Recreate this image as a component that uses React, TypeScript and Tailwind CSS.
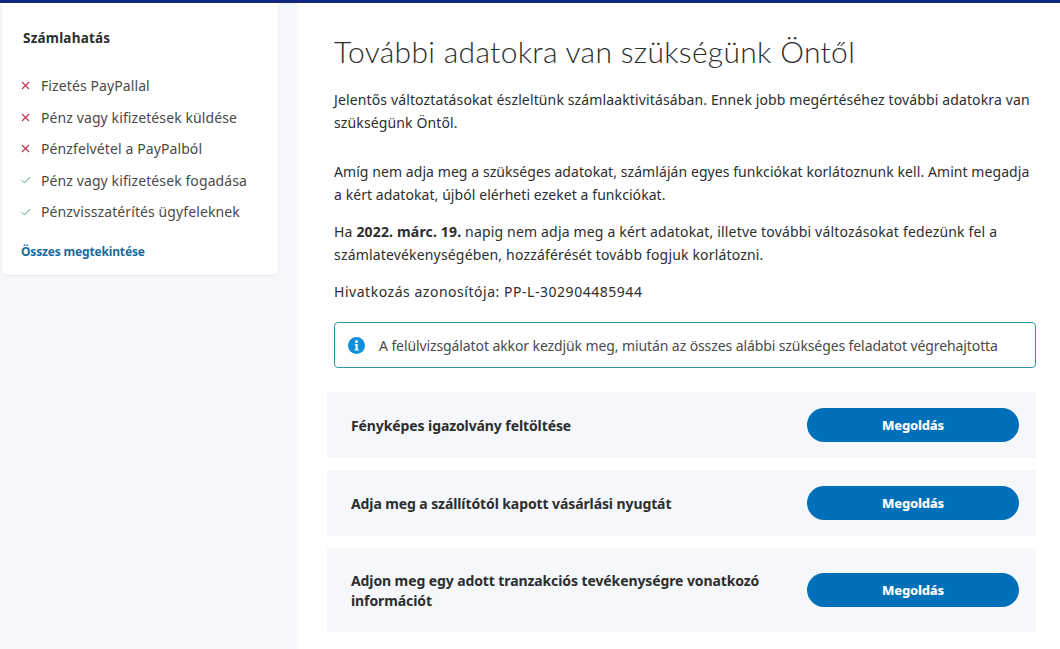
import React from "react";

function Cross() {
  return (
    <svg width="9" height="9" viewBox="0 0 9 9" className="shrink-0">
      <path d="M1 1l7 7M8 1L1 8" stroke="#c0324a" strokeWidth="1.1" fill="none" />
    </svg>
  );
}
function Check() {
  return (
    <svg width="10" height="8" viewBox="0 0 10 8" className="shrink-0">
      <path d="M.8 4.2l2.7 2.7L9.2 1" stroke="#4f9a86" strokeWidth="1" fill="none" />
    </svg>
  );
}

const items: [string, boolean, string][] = [
  ["Fizetés PayPallal", false, "h-[31px]"],
  ["Pénz vagy kifizetések küldése", false, "h-[32px]"],
  ["Pénzfelvétel a PayPalból", false, "h-[31px]"],
  ["Pénz vagy kifizetések fogadása", true, "h-[32px]"],
  ["Pénzvisszatérítés ügyfeleknek", true, "h-[31px]"],
];

function Task({ text, h }: { text: React.ReactNode; h: string }) {
  return (
    <div className={`flex items-center justify-between bg-[#f5f7fa] pl-[24px] pr-[17px] ${h}`}>
      <div className="w-[430px] pt-[2px] text-[14px] leading-[20px] font-bold tracking-[-0.1px] text-[#2c2e2f]">{text}</div>
      <button className="h-[34px] w-[212px] rounded-full bg-[#0070ba] pt-[1px] text-[13px] font-extrabold tracking-[-0.2px] text-white">Megoldás</button>
    </div>
  );
}

export default function App() {
  return (
    <div className="h-[649px] w-[1060px] overflow-hidden bg-white font-['Noto_Sans',sans-serif] text-[#2c2e2f]">
      <div className="h-[3px] bg-[#11297f]" />
      <div className="flex h-[646px]">
        <aside className="h-full w-[298px] shrink-0 bg-[#f5f7fa] pl-[2px]">
          <div className="h-[272px] w-[276px] rounded-b-[5px] bg-white pl-[19px] pt-[25px] shadow-[0_1px_2px_rgba(0,0,0,0.08)]">
            <h2 className="pl-[2px] text-[13.5px] leading-[20px] font-bold tracking-[0.2px] text-[#2c2e2f]">Számlahatás</h2>
            <ul className="mt-[22px]">
              {items.map(([label, ok, h]) => (
                <li key={label} className={`flex items-center gap-[11px] text-[14px] tracking-[0.1px] text-[#4a4a4a] ${h}`}>
                  <span className="flex w-[9px] justify-center">{ok ? <Check /> : <Cross />}</span>
                  {label}
                </li>
              ))}
            </ul>
            <a className="mt-[15px] block text-[12px] leading-[20px] font-bold tracking-[-0.17px] text-[#1a6a9f]">Összes megtekintése</a>
          </div>
        </aside>
        <main className="flex-1 pl-[29px] pr-[24px]">
          <h1 className="mt-[28px] pl-[7px] font-['Lato',sans-serif] text-[30px] leading-[40px] font-light tracking-[0.32px] text-[#2c2e2f]">
            További adatokra van szükségünk Öntől
          </h1>
          <div className="pl-[7px] text-[14px] leading-[23px] tracking-[0.17px] text-[#2c2e2f]">
            <p className="mt-[17px] tracking-[0.13px]">
              Jelentős változtatásokat észleltünk számlaaktivitásában. Ennek jobb megértéséhez további adatokra van szükségünk Öntől.
            </p>
            <p className="mt-[26px] tracking-[0.07px]">
              Amíg nem adja meg a szükséges adatokat, számláján egyes funkciókat korlátoznunk kell. Amint megadja a kért adatokat, újból elérheti ezeket a funkciókat.
            </p>
            <p className="mt-[14px]">
              Ha <b>2022. márc. 19.</b> napig nem adja meg a kért adatokat, illetve további változásokat fedezünk fel a számlatevékenységében, hozzáférését tovább fogjuk korlátozni.
            </p>
            <p className="mt-[14px] tracking-[0.53px]">Hivatkozás azonosítója: PP-L-302904485944</p>
          </div>
          <div className="mt-[19px] ml-[7px] flex h-[46px] items-center gap-[14px] rounded-[4px] border border-[#2b97a5] pl-[13px] text-[14px] tracking-[-0.1px] text-[#4a4a4a]">
            <svg width="17" height="17" viewBox="0 0 17 17" className="shrink-0">
              <circle cx="8.5" cy="8.5" r="8.5" fill="#0c8fdc" />
              <circle cx="8.5" cy="4.5" r="1.5" fill="#fff" />
              <path d="M6.8 7h2.9v5.2h1v1.3H6.6v-1.3h1V8.3h-.8z" fill="#fff" />
            </svg>
            A felülvizsgálatot akkor kezdjük meg, miután az összes alábbi szükséges feladatot végrehajtotta
          </div>
          <div className="mt-[24px] flex flex-col gap-[12px]">
            <Task text="Fényképes igazolvány feltöltése" h="h-[66px]" />
            <Task text="Adja meg a szállítótól kapott vásárlási nyugtát" h="h-[66px]" />
            <Task text="Adjon meg egy adott tranzakciós tevékenységre vonatkozó információt" h="h-[84px]" />
          </div>
        </main>
      </div>
    </div>
  );
}
